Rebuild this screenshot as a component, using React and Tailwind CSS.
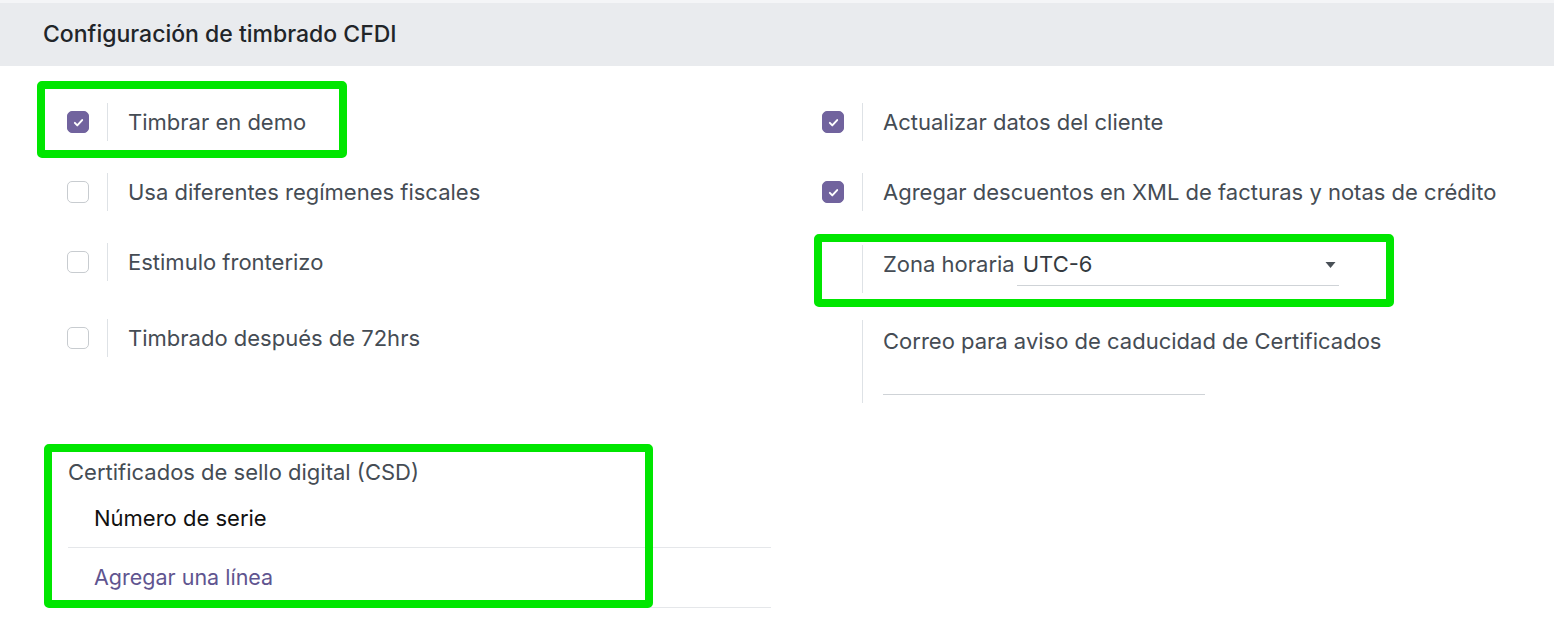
import { useState } from "react";

const font = { fontFamily: "Inter, 'Noto Sans', sans-serif" };

const CheckRow = ({ checked, label, onToggle, className = "" }) => (
  <div className={`flex h-[38px] items-stretch ${className}`}>
    <div className="flex w-[40px] shrink-0 items-center">
      <button
        onClick={onToggle}
        className={`flex h-[22px] w-[22px] items-center justify-center rounded-[5px] border ${
          checked ? "border-[#71639e] bg-[#71639e]" : "border-[#c8ccd0] bg-white"
        }`}
      >
        {checked && (
          <svg viewBox="0 0 16 16" className="h-[13px] w-[13px]">
            <path d="M3.5 8.5l3 3 6-6.5" fill="none" stroke="white" strokeWidth="2.4" strokeLinecap="round" strokeLinejoin="round" />
          </svg>
        )}
      </button>
    </div>
    <div className="flex items-center border-l border-[#dee2e6] pl-5 text-[22px] text-[#454c54]">
      {label}
    </div>
  </div>
);

const App = () => {
  const [checks, setChecks] = useState({
    demo: true,
    regimenes: false,
    estimulo: false,
    despues: false,
    actualizar: true,
    descuentos: true,
  });

  const toggle = (key) => setChecks((prev) => ({ ...prev, [key]: !prev[key] }));

  return (
    <div className="relative h-[622px] w-full overflow-hidden bg-white" style={font}>
      {/* Section header */}
      <div className="flex h-[66px] items-center border-t-[3px] border-[#f4f5f7] bg-[#e9ebee] pl-[43px]">
        <h2 className="text-[23px] font-medium text-[#212529]">Configuración de timbrado CFDI</h2>
      </div>

      <div className="flex pl-[67px] pt-[37px]">
        {/* Left column */}
        <div className="flex w-[755px] shrink-0 flex-col">
          <CheckRow checked={checks.demo} label="Timbrar en demo" onToggle={() => toggle("demo")} />
          <CheckRow
            className="mt-[32px]"
            checked={checks.regimenes}
            label="Usa diferentes regímenes fiscales"
            onToggle={() => toggle("regimenes")}
          />
          <CheckRow
            className="mt-[32px]"
            checked={checks.estimulo}
            label="Estimulo fronterizo"
            onToggle={() => toggle("estimulo")}
          />
          <CheckRow
            className="mt-[38px]"
            checked={checks.despues}
            label="Timbrado después de 72hrs"
            onToggle={() => toggle("despues")}
          />
        </div>

        {/* Right column */}
        <div className="flex flex-col">
          <CheckRow checked={checks.actualizar} label="Actualizar datos del cliente" onToggle={() => toggle("actualizar")} />
          <CheckRow
            className="mt-[32px]"
            checked={checks.descuentos}
            label="Agregar descuentos en XML de facturas y notas de crédito"
            onToggle={() => toggle("descuentos")}
          />

          <div className="mt-[34px] flex h-[48px]">
            <div className="w-[40px] shrink-0" />
            <div className="flex items-start border-l border-[#dee2e6] pl-5 pt-[3px] text-[22px] text-[#454c54]">
              <span>Zona horaria</span>
              <div className="relative ml-[2px] flex h-[38px] w-[322px] items-start border-b border-[#cfd3d7] pl-[6px] text-[#343a40]">
                <span>UTC-6</span>
                <svg viewBox="0 0 10 6" className="absolute right-[3px] top-[14px] h-[6px] w-[11px]">
                  <path d="M0 0h10L5 6z" fill="#495057" />
                </svg>
              </div>
            </div>
          </div>

          <div className="mt-[27px] flex h-[83px]">
            <div className="w-[40px] shrink-0" />
            <div className="flex flex-col border-l border-[#dee2e6] pl-5 pt-[5px] text-[22px] text-[#454c54]">
              <span>Correo para aviso de caducidad de Certificados</span>
              <div className="mt-[36px] h-px w-[322px] bg-[#cfd3d7]" />
            </div>
          </div>
        </div>
      </div>

      {/* Certificates */}
      <div className="mt-[53px] w-[771px] pl-[68px]">
        <div className="text-[22px] text-[#454c54]">Certificados de sello digital (CSD)</div>
        <div className="mt-[13px] flex h-[46px] items-start border-b border-[#e5e7ea] pl-[26px] text-[22px] text-[#111]">
          Número de serie
        </div>
        <button className="flex h-[60px] w-full items-center border-b border-[#e5e7ea] pl-[26px] text-[21.5px] text-[#5f5590]">
          Agregar una línea
        </button>
      </div>

      {/* Annotation boxes */}
      <div className="pointer-events-none absolute left-[37px] top-[81px] h-[77px] w-[310px] rounded-[5px] border-[8px] border-[#00e600]" />
      <div className="pointer-events-none absolute left-[814px] top-[234px] h-[73px] w-[580px] rounded-[5px] border-[8px] border-[#00e600]" />
      <div className="pointer-events-none absolute left-[44px] top-[444px] h-[164px] w-[609px] rounded-[5px] border-[8px] border-[#00e600]" />
    </div>
  );
};

export default App;
